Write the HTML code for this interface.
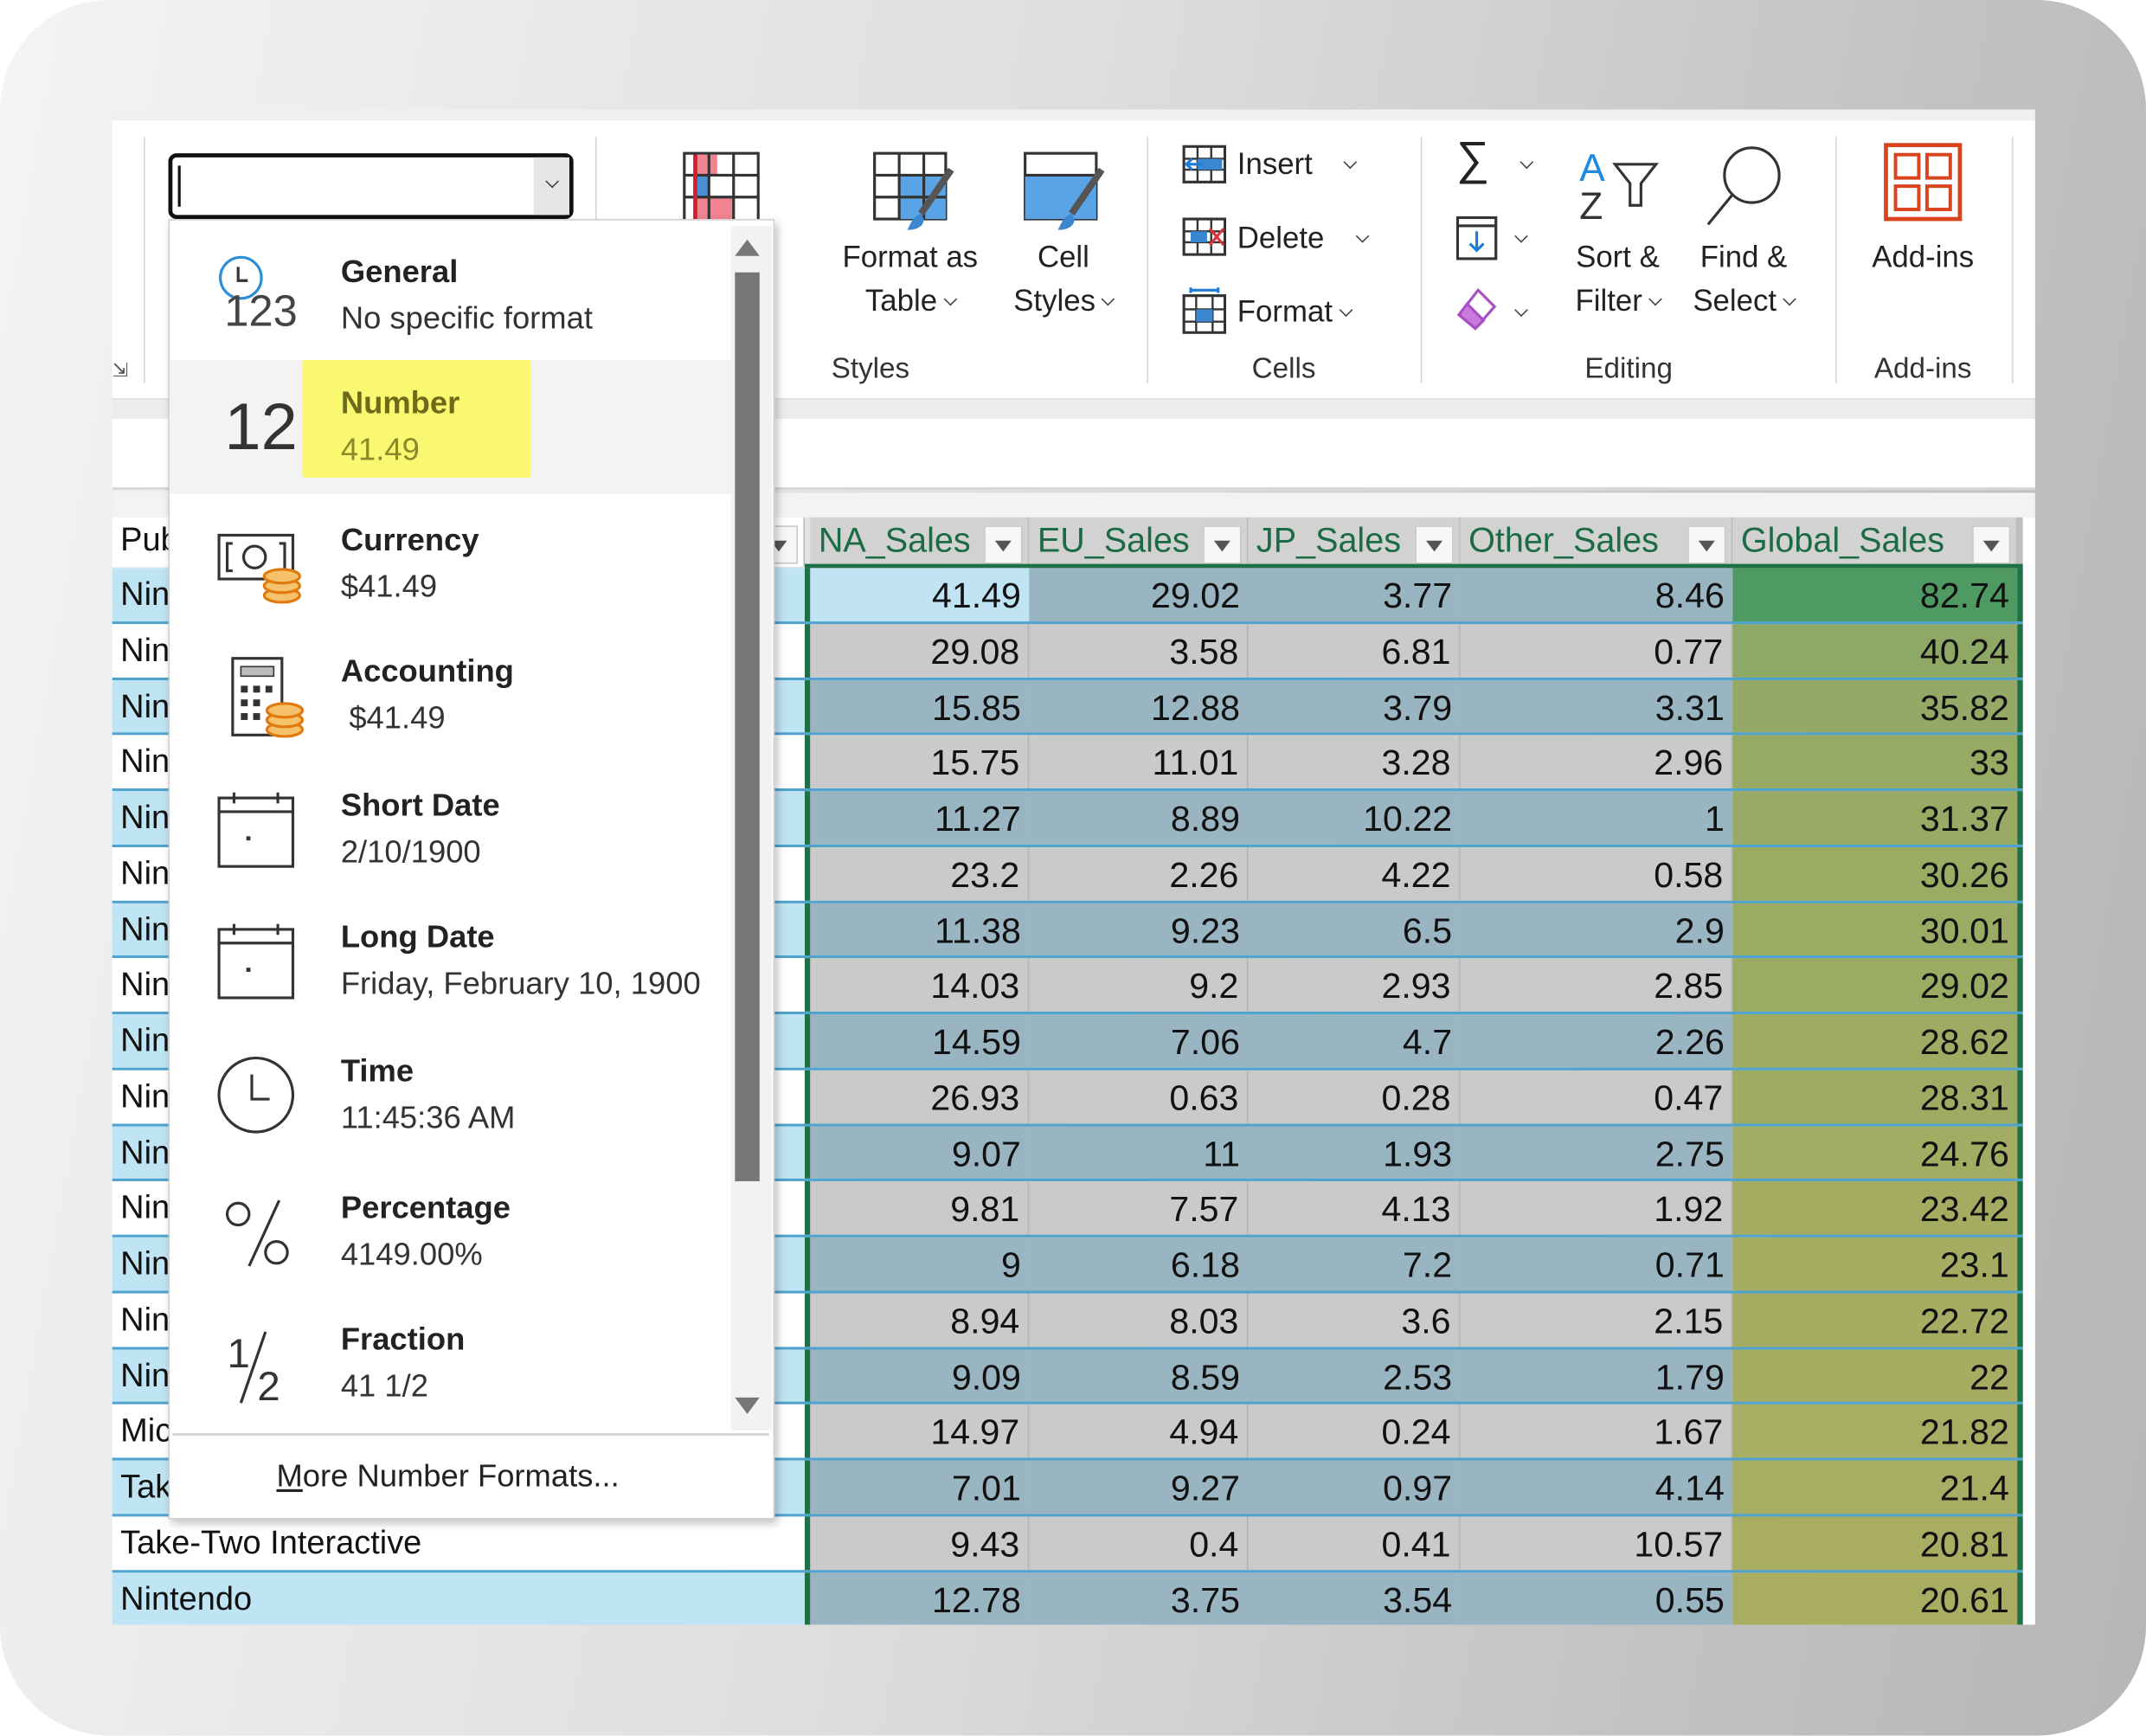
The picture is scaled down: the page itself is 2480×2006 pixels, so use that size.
<!DOCTYPE html>
<html><head><meta charset="utf-8">
<style>
*{margin:0;padding:0;box-sizing:border-box}
html,body{width:2480px;height:2006px;overflow:hidden;background:#fff}
#s{position:absolute;left:0;top:0;width:1568px;height:1268px;transform:scale(1.58163);transform-origin:0 0;font-family:"Liberation Sans",sans-serif}
.bg{position:absolute;left:0;top:0;width:1568px;height:1268px;border-radius:80px;background:linear-gradient(100deg,#f4f4f4 0%,#dedede 45%,#c2c2c2 80%,#b6b6b6 100%)}
.a{position:absolute}
.rib{left:82px;top:88px;width:1405px;height:204px;background:#fff;border-bottom:1px solid #dcdcdc}
.vs{position:absolute;width:1px;background:#d6d6d6;top:12px;height:180px}
.lbl{position:absolute;font-size:21px;color:#333;top:170px;text-align:center}
.bt{position:absolute;font-size:22px;color:#222;text-align:center;line-height:32px}
.ch{display:inline-block;width:7px;height:7px;border-right:1.6px solid #444;border-bottom:1.6px solid #444;transform:rotate(45deg);margin:0 0 5px 6px;vertical-align:middle}
.row{position:absolute;left:82px;width:1396px;height:40.75px;display:flex;border-bottom:2px solid #4ea3cf}
.row div{height:100%;font-family:"Liberation Sans Narrow","Liberation Sans",sans-serif;font-size:26px;line-height:40px;color:#111}
.c0{width:506px;padding-left:6px;font-family:"Liberation Sans",sans-serif!important;font-size:24px!important}
.sep{width:4px;background:#1e7145}
.n{text-align:right;padding-right:6px}
.w1{width:160px}.w2{width:160px}.w3{width:155px}.w4{width:199px}.w5{width:208px}
.o .c0{background:#bfe4f3}.e .c0{background:#fff}
.o .n{background:#98b5c1}.e .n{background:#cacaca;border-right:1px solid #b3b3b3}
.row .g{border-right:none!important}
.hd{position:absolute;top:378px;height:36px;background:#d2d2d2;font-family:"Liberation Sans Narrow","Liberation Sans",sans-serif;font-size:25px;color:#1d6b45;line-height:34px;padding-left:6px;border-right:1px solid #bbb}
.fb{position:absolute;top:6px;right:4px;width:28px;height:28px;background:#f7f7f7;border:1px solid #c8c8c8}
.fb:after{content:"";position:absolute;left:7px;top:10px;border-left:6px solid transparent;border-right:6px solid transparent;border-top:8px solid #555}
.dd{left:123px;top:160px;width:443px;height:950px;background:#fff;border:1px solid #d0d0d0;box-shadow:2px 3px 6px rgba(0,0,0,.25)}
.it{position:absolute;left:0;width:410px;height:98px}
.t1{position:absolute;left:125px;font-size:23px;font-weight:bold;color:#222}
.t2{position:absolute;left:125px;font-size:23px;color:#333}
</style></head><body>
<div id="s">
<div class="bg"></div>
<div class="a" style="left:82px;top:80px;width:1405px;height:8px;background:#f0f0f0"></div>
<!-- ribbon -->
<div class="a rib">
 <div class="vs" style="left:23px"></div>
 <div class="vs" style="left:353px"></div>
 <div class="vs" style="left:756px"></div>
 <div class="vs" style="left:956px"></div>
 <div class="vs" style="left:1259px"></div>
 <div class="vs" style="left:1388px"></div>
 <div class="a" style="left:0;top:174px;font-size:14px;color:#555">&#8690;</div>
 <svg class="a" style="left:416px;top:22px" width="60" height="56" viewBox="0 0 60 56"><rect x="2" y="2" width="54" height="50" fill="#fff" stroke="#333" stroke-width="2"/><rect x="10" y="3" width="16" height="15" fill="#f0838f"/><rect x="10" y="18" width="10" height="16" fill="#4a90d9"/><rect x="10" y="34" width="28" height="17" fill="#f0838f"/><path d="M20 2v50M38 2v50M2 18h54M2 34h54M10 2v50" stroke="#333" stroke-width="2" fill="none"/><path d="M10 3v48" stroke="#d02030" stroke-width="3"/></svg>
 <svg class="a" style="left:555px;top:22px" width="62" height="62" viewBox="0 0 62 62"><rect x="2" y="2" width="52" height="48" fill="#fff" stroke="#333" stroke-width="2"/><rect x="20" y="18" width="34" height="32" fill="#5aa4e6"/><path d="M20 2v48M38 2v48M2 18h52M2 34h52" stroke="#333" stroke-width="2"/><path d="M58 14L36 46" stroke="#555" stroke-width="5"/><path d="M36 46c-6 2-8 8-10 12 6 0 12-2 12-8z" fill="#3a87d0"/></svg>
 <div class="bt" style="left:445px;top:84px;width:82px;text-align:left">nal<br>g<span class="ch"></span></div>
 <div class="bt" style="left:528px;top:84px;width:110px">Format as<br>Table<span class="ch"></span></div>
 <svg class="a" style="left:665px;top:22px" width="62" height="62" viewBox="0 0 62 62"><rect x="2" y="2" width="52" height="48" fill="#fff" stroke="#333" stroke-width="2"/><rect x="2" y="18" width="52" height="32" fill="#5aa4e6"/><path d="M2 18h52" stroke="#333" stroke-width="2"/><path d="M58 14L36 46" stroke="#555" stroke-width="5"/><path d="M36 46c-6 2-8 8-10 12 6 0 12-2 12-8z" fill="#3a87d0"/></svg>
 <div class="bt" style="left:645px;top:84px;width:100px">Cell<br>Styles<span class="ch"></span></div>
 <div class="lbl" style="left:504px;width:100px">Styles</div>
 <svg class="a" style="left:782px;top:18px" width="32" height="28" viewBox="0 0 32 28"><rect x="1" y="1" width="30" height="26" fill="#fff" stroke="#333" stroke-width="2"/><path d="M1 10h30M1 18h30M11 1v26M21 1v26" stroke="#333" stroke-width="1.5"/><rect x="11" y="10" width="18" height="8" fill="#3a87d0"/><path d="M14 14H3M7 10l-4 4 4 4" stroke="#1e7bd6" stroke-width="2" fill="none"/></svg>
 <div class="bt" style="left:822px;top:16px;text-align:left">Insert &nbsp;&nbsp;<span class="ch"></span></div>
 <svg class="a" style="left:782px;top:71px" width="32" height="28" viewBox="0 0 32 28"><rect x="1" y="1" width="30" height="26" fill="#fff" stroke="#333" stroke-width="2"/><path d="M1 10h30M1 18h30M11 1v26M21 1v26" stroke="#333" stroke-width="1.5"/><rect x="6" y="10" width="12" height="8" fill="#3a87d0"/><path d="M20 8l10 12M30 8L20 20" stroke="#e0303a" stroke-width="2"/></svg>
 <div class="bt" style="left:822px;top:70px;text-align:left">Delete &nbsp;&nbsp;<span class="ch"></span></div>
 <svg class="a" style="left:782px;top:122px" width="32" height="34" viewBox="0 0 32 34"><rect x="1" y="6" width="30" height="27" fill="#fff" stroke="#333" stroke-width="2"/><path d="M1 16h30M1 25h30M10 6v27M22 6v27" stroke="#333" stroke-width="1.5"/><rect x="10" y="16" width="12" height="9" fill="#3a87d0"/><path d="M6 2h20M6 0v4M26 0v4" stroke="#1e7bd6" stroke-width="2"/></svg>
 <div class="bt" style="left:822px;top:124px;text-align:left">Format<span class="ch"></span></div>
 <div class="lbl" style="left:806px;width:100px">Cells</div>
 <div class="bt" style="left:982px;top:12px;font-size:34px">&#8721;</div><div class="bt" style="left:1024px;top:16px"><span class="ch"></span></div>
 <svg class="a" style="left:982px;top:70px" width="32" height="34" viewBox="0 0 32 34"><rect x="1" y="1" width="28" height="30" fill="#fff" stroke="#333" stroke-width="2"/><path d="M1 7h28" stroke="#333" stroke-width="2"/><path d="M15 11v14M10 20l5 5 5-5" stroke="#1e7bd6" stroke-width="2" fill="none"/></svg><div class="bt" style="left:1020px;top:70px"><span class="ch"></span></div>
 <svg class="a" style="left:980px;top:122px" width="34" height="34" viewBox="0 0 34 34"><path d="M18 2l12 12-14 16L4 20z" fill="#fff" stroke="#a84fc4" stroke-width="2"/><path d="M10 12l12 12-6 6L4 20z" fill="#c67bdd" stroke="#a84fc4" stroke-width="2"/></svg><div class="bt" style="left:1020px;top:124px"><span class="ch"></span></div>
 <svg class="a" style="left:1070px;top:18px" width="64" height="56" viewBox="0 0 64 56"><text x="2" y="26" font-size="28" fill="#1e8be0" font-family="Liberation Sans">A</text><text x="2" y="54" font-size="28" fill="#333" font-family="Liberation Sans">Z</text><path d="M28 14h30l-11 14v16h-8V28z" fill="#fff" stroke="#333" stroke-width="2"/></svg>
 <div class="bt" style="left:1058px;top:84px;width:84px">Sort &amp;<br>Filter<span class="ch"></span></div>
 <svg class="a" style="left:1160px;top:14px" width="66" height="66" viewBox="0 0 66 66"><circle cx="38" cy="26" r="20" fill="#fff" stroke="#333" stroke-width="2"/><path d="M24 40L6 62" stroke="#333" stroke-width="2"/></svg>
 <div class="bt" style="left:1150px;top:84px;width:84px">Find &amp;<br>Select<span class="ch"></span></div>
 <div class="lbl" style="left:1058px;width:100px">Editing</div>
 <svg class="a" style="left:1294px;top:16px" width="60" height="60" viewBox="0 0 60 60"><rect x="2" y="2" width="54" height="54" fill="#fff" stroke="#d9441d" stroke-width="3"/><rect x="9" y="9" width="17" height="17" fill="none" stroke="#d9441d" stroke-width="2.5"/><rect x="32" y="9" width="17" height="17" fill="none" stroke="#d9441d" stroke-width="2.5"/><rect x="9" y="32" width="17" height="17" fill="none" stroke="#d9441d" stroke-width="2.5"/><rect x="32" y="32" width="17" height="17" fill="none" stroke="#d9441d" stroke-width="2.5"/></svg>
 <div class="bt" style="left:1273px;top:84px;width:100px">Add-ins</div>
 <div class="lbl" style="left:1273px;width:100px">Add-ins</div>
</div>
<div class="a" style="left:82px;top:292px;width:1405px;height:14px;background:#ececec"></div>
<div class="a" style="left:82px;top:306px;width:1405px;height:52px;background:#fff;border-bottom:2px solid #d8d8d8"></div>
<div class="a" style="left:82px;top:360px;width:1405px;height:18px;background:#f3f3f3"></div>
<div class="hd" style="left:82px;width:506px;color:#111;background:#fff;font-family:'Liberation Sans',sans-serif;font-size:24px">Publisher<span class="fb"></span></div>
<div class="hd" style="left:592px;width:160px">NA_Sales<span class="fb"></span></div>
<div class="hd" style="left:752px;width:160px">EU_Sales<span class="fb"></span></div>
<div class="hd" style="left:912px;width:155px">JP_Sales<span class="fb"></span></div>
<div class="hd" style="left:1067px;width:199px">Other_Sales<span class="fb"></span></div>
<div class="hd" style="left:1266px;width:208px">Global_Sales<span class="fb"></span></div>
<div class="a" style="left:1478px;top:378px;width:9px;height:809px;background:#fff"></div>
<div class="a" style="left:588px;top:412px;width:890px;height:3px;background:#1e7145"></div>
<div class="row o" style="top:415px"><div class="c0">Nintendo</div><div class="sep"></div><div class="n w1" style="background:#c0e4f4">41.49</div><div class="n w2">29.02</div><div class="n w3">3.77</div><div class="n w4">8.46</div><div class="n w5 g" style="background:#4f9a62">82.74</div><div class="sep"></div></div>
<div class="row e" style="top:455.75px"><div class="c0">Nintendo</div><div class="sep"></div><div class="n w1">29.08</div><div class="n w2">3.58</div><div class="n w3">6.81</div><div class="n w4">0.77</div><div class="n w5 g" style="background:#8ea866">40.24</div><div class="sep"></div></div>
<div class="row o" style="top:496.5px"><div class="c0">Nintendo</div><div class="sep"></div><div class="n w1">15.85</div><div class="n w2">12.88</div><div class="n w3">3.79</div><div class="n w4">3.31</div><div class="n w5 g" style="background:#93a965">35.82</div><div class="sep"></div></div>
<div class="row e" style="top:537.25px"><div class="c0">Nintendo</div><div class="sep"></div><div class="n w1">15.75</div><div class="n w2">11.01</div><div class="n w3">3.28</div><div class="n w4">2.96</div><div class="n w5 g" style="background:#96aa64">33</div><div class="sep"></div></div>
<div class="row o" style="top:578px"><div class="c0">Nintendo</div><div class="sep"></div><div class="n w1">11.27</div><div class="n w2">8.89</div><div class="n w3">10.22</div><div class="n w4">1</div><div class="n w5 g" style="background:#98aa64">31.37</div><div class="sep"></div></div>
<div class="row e" style="top:618.75px"><div class="c0">Nintendo</div><div class="sep"></div><div class="n w1">23.2</div><div class="n w2">2.26</div><div class="n w3">4.22</div><div class="n w4">0.58</div><div class="n w5 g" style="background:#9aab63">30.26</div><div class="sep"></div></div>
<div class="row o" style="top:659.5px"><div class="c0">Nintendo</div><div class="sep"></div><div class="n w1">11.38</div><div class="n w2">9.23</div><div class="n w3">6.5</div><div class="n w4">2.9</div><div class="n w5 g" style="background:#9bab63">30.01</div><div class="sep"></div></div>
<div class="row e" style="top:700.25px"><div class="c0">Nintendo</div><div class="sep"></div><div class="n w1">14.03</div><div class="n w2">9.2</div><div class="n w3">2.93</div><div class="n w4">2.85</div><div class="n w5 g" style="background:#9cab63">29.02</div><div class="sep"></div></div>
<div class="row o" style="top:741px"><div class="c0">Nintendo</div><div class="sep"></div><div class="n w1">14.59</div><div class="n w2">7.06</div><div class="n w3">4.7</div><div class="n w4">2.26</div><div class="n w5 g" style="background:#9dab63">28.62</div><div class="sep"></div></div>
<div class="row e" style="top:781.75px"><div class="c0">Nintendo</div><div class="sep"></div><div class="n w1">26.93</div><div class="n w2">0.63</div><div class="n w3">0.28</div><div class="n w4">0.47</div><div class="n w5 g" style="background:#9eab63">28.31</div><div class="sep"></div></div>
<div class="row o" style="top:822.5px"><div class="c0">Nintendo</div><div class="sep"></div><div class="n w1">9.07</div><div class="n w2">11</div><div class="n w3">1.93</div><div class="n w4">2.75</div><div class="n w5 g" style="background:#a2ac62">24.76</div><div class="sep"></div></div>
<div class="row e" style="top:863.25px"><div class="c0">Nintendo</div><div class="sep"></div><div class="n w1">9.81</div><div class="n w2">7.57</div><div class="n w3">4.13</div><div class="n w4">1.92</div><div class="n w5 g" style="background:#a4ac62">23.42</div><div class="sep"></div></div>
<div class="row o" style="top:904px"><div class="c0">Nintendo</div><div class="sep"></div><div class="n w1">9</div><div class="n w2">6.18</div><div class="n w3">7.2</div><div class="n w4">0.71</div><div class="n w5 g" style="background:#a5ad62">23.1</div><div class="sep"></div></div>
<div class="row e" style="top:944.75px"><div class="c0">Nintendo</div><div class="sep"></div><div class="n w1">8.94</div><div class="n w2">8.03</div><div class="n w3">3.6</div><div class="n w4">2.15</div><div class="n w5 g" style="background:#a5ad62">22.72</div><div class="sep"></div></div>
<div class="row o" style="top:985.5px"><div class="c0">Nintendo</div><div class="sep"></div><div class="n w1">9.09</div><div class="n w2">8.59</div><div class="n w3">2.53</div><div class="n w4">1.79</div><div class="n w5 g" style="background:#a6ad62">22</div><div class="sep"></div></div>
<div class="row e" style="top:1026.25px"><div class="c0">Microsoft Game Studios</div><div class="sep"></div><div class="n w1">14.97</div><div class="n w2">4.94</div><div class="n w3">0.24</div><div class="n w4">1.67</div><div class="n w5 g" style="background:#a7ad62">21.82</div><div class="sep"></div></div>
<div class="row o" style="top:1067px"><div class="c0">Take-Two Interactive</div><div class="sep"></div><div class="n w1">7.01</div><div class="n w2">9.27</div><div class="n w3">0.97</div><div class="n w4">4.14</div><div class="n w5 g" style="background:#a7ad62">21.4</div><div class="sep"></div></div>
<div class="row e" style="top:1107.75px"><div class="c0">Take-Two Interactive</div><div class="sep"></div><div class="n w1">9.43</div><div class="n w2">0.4</div><div class="n w3">0.41</div><div class="n w4">10.57</div><div class="n w5 g" style="background:#a8ad62">20.81</div><div class="sep"></div></div>
<div class="row o" style="top:1148.5px;height:38.5px;border-bottom:none"><div class="c0">Nintendo</div><div class="sep"></div><div class="n w1">12.78</div><div class="n w2">3.75</div><div class="n w3">3.54</div><div class="n w4">0.55</div><div class="n w5 g" style="background:#a8ad62">20.61</div><div class="sep"></div></div>
<div class="a" style="left:123px;top:112px;width:296px;height:48px;border:3px solid #111;border-radius:6px;background:#fff">
 <div class="a" style="left:4px;top:6px;width:2px;height:30px;background:#111"></div>
 <div class="a" style="right:0;top:0;width:26px;height:42px;background:#e6e6e6;text-align:center;line-height:36px"><span class="ch" style="margin:0"></span></div>
</div>
<div class="a dd">
 <div class="it" style="top:4px">
  <svg class="a" style="left:34px;top:20px" width="36" height="36" viewBox="0 0 36 36"><circle cx="18" cy="18" r="15" fill="none" stroke="#2c8ed6" stroke-width="2"/><path d="M16 10v10h7" stroke="#333" stroke-width="2" fill="none"/></svg>
  <div class="a" style="left:40px;top:44px;font-size:32px;color:#444">123</div>
  <div class="t1" style="top:20px">General</div><div class="t2" style="top:54px">No specific format</div>
 </div>
 <div class="it" style="top:102px;background:#f3f3f3"></div>
 <div class="a" style="left:97px;top:102px;width:167px;height:86px;background:#f9f870;border-radius:2px"></div>
 <div class="it" style="top:102px">
  <div class="a" style="left:40px;top:22px;font-size:48px;color:#333">12</div>
  <div class="t1" style="top:18px;color:#6b6b1a">Number</div><div class="t2" style="top:52px;color:#8a8a2a">41.49</div>
 </div>
 <div class="it" style="top:200px">
  <svg class="a" style="left:34px;top:26px" width="64" height="56" viewBox="0 0 64 56"><rect x="2" y="4" width="54" height="32" fill="#fff" stroke="#333" stroke-width="2"/><path d="M12 10h-4v20h4M46 10h4v20h-4" stroke="#333" stroke-width="2" fill="none"/><circle cx="28" cy="20" r="8" fill="none" stroke="#333" stroke-width="2"/><g fill="#f5c26b" stroke="#e07a10" stroke-width="2"><ellipse cx="48" cy="48" rx="13" ry="5"/><ellipse cx="48" cy="41" rx="13" ry="5"/><ellipse cx="48" cy="34" rx="13" ry="5"/></g></svg>
  <div class="t1" style="top:20px">Currency</div><div class="t2" style="top:54px">$41.49</div>
 </div>
 <div class="it" style="top:298px">
  <svg class="a" style="left:44px;top:20px" width="56" height="64" viewBox="0 0 56 64"><rect x="2" y="2" width="36" height="56" fill="#fff" stroke="#333" stroke-width="2"/><rect x="8" y="8" width="24" height="7" fill="#bbb" stroke="#333"/><g fill="#333"><rect x="8" y="22" width="5" height="5"/><rect x="17" y="22" width="5" height="5"/><rect x="26" y="22" width="5" height="5"/><rect x="8" y="32" width="5" height="5"/><rect x="17" y="32" width="5" height="5"/><rect x="8" y="42" width="5" height="5"/><rect x="17" y="42" width="5" height="5"/></g><g fill="#f5c26b" stroke="#e07a10" stroke-width="2"><ellipse cx="40" cy="54" rx="13" ry="5"/><ellipse cx="40" cy="47" rx="13" ry="5"/><ellipse cx="40" cy="40" rx="13" ry="5"/></g></svg>
  <div class="t1" style="top:18px">Accounting</div><div class="t2" style="top:52px;left:131px">$41.49</div>
 </div>
 <div class="it" style="top:396px">
  <svg class="a" style="left:34px;top:20px" width="60" height="58" viewBox="0 0 60 58"><rect x="2" y="6" width="54" height="50" fill="#fff" stroke="#333" stroke-width="2"/><path d="M2 16h54M13 2v8M45 2v8" stroke="#333" stroke-width="2"/><rect x="22" y="34" width="3" height="3" fill="#333"/></svg>
  <div class="t1" style="top:18px">Short Date</div><div class="t2" style="top:52px">2/10/1900</div>
 </div>
 <div class="it" style="top:494px">
  <svg class="a" style="left:34px;top:18px" width="60" height="58" viewBox="0 0 60 58"><rect x="2" y="6" width="54" height="50" fill="#fff" stroke="#333" stroke-width="2"/><path d="M2 16h54M13 2v8M45 2v8" stroke="#333" stroke-width="2"/><rect x="22" y="34" width="3" height="3" fill="#333"/></svg>
  <div class="t1" style="top:16px">Long Date</div><div class="t2" style="top:50px">Friday, February 10, 1900</div>
 </div>
 <div class="it" style="top:592px">
  <svg class="a" style="left:34px;top:18px" width="60" height="60" viewBox="0 0 60 60"><circle cx="29" cy="29" r="27" fill="#fff" stroke="#333" stroke-width="2"/><path d="M26 14v18h13" stroke="#333" stroke-width="2" fill="none"/></svg>
  <div class="t1" style="top:16px">Time</div><div class="t2" style="top:50px">11:45:36 AM</div>
 </div>
 <div class="it" style="top:690px">
  <svg class="a" style="left:38px;top:22px" width="56" height="56" viewBox="0 0 56 56"><circle cx="12" cy="14" r="8" fill="none" stroke="#333" stroke-width="2"/><circle cx="40" cy="42" r="8" fill="none" stroke="#333" stroke-width="2"/><path d="M42 4L20 52" stroke="#333" stroke-width="2"/></svg>
  <div class="t1" style="top:18px">Percentage</div><div class="t2" style="top:52px">4149.00%</div>
 </div>
 <div class="it" style="top:788px">
  <svg class="a" style="left:40px;top:18px" width="50" height="60" viewBox="0 0 50 60"><text x="2" y="32" font-size="30" fill="#333" font-family="Liberation Sans">1</text><path d="M30 6L12 58" stroke="#333" stroke-width="2"/><text x="24" y="56" font-size="30" fill="#333" font-family="Liberation Sans">2</text></svg>
  <div class="t1" style="top:16px">Fraction</div><div class="t2" style="top:50px">41 1/2</div>
 </div>
 <div class="a" style="left:410px;top:4px;width:30px;height:880px;background:#f2f2f2"></div>
 <div class="a" style="left:413px;top:38px;width:18px;height:664px;background:#767676"></div>
 <div class="a" style="left:413px;top:14px;border-left:9px solid transparent;border-right:9px solid transparent;border-bottom:12px solid #777"></div>
 <div class="a" style="left:413px;top:860px;border-left:9px solid transparent;border-right:9px solid transparent;border-top:12px solid #777"></div>
 <div class="a" style="left:2px;top:886px;width:436px;height:2px;background:#d6d6d6"></div>
 <div class="a" style="left:78px;top:904px;font-size:23px;color:#222"><u>M</u>ore Number Formats...</div>
</div>
</div>
</body></html>
